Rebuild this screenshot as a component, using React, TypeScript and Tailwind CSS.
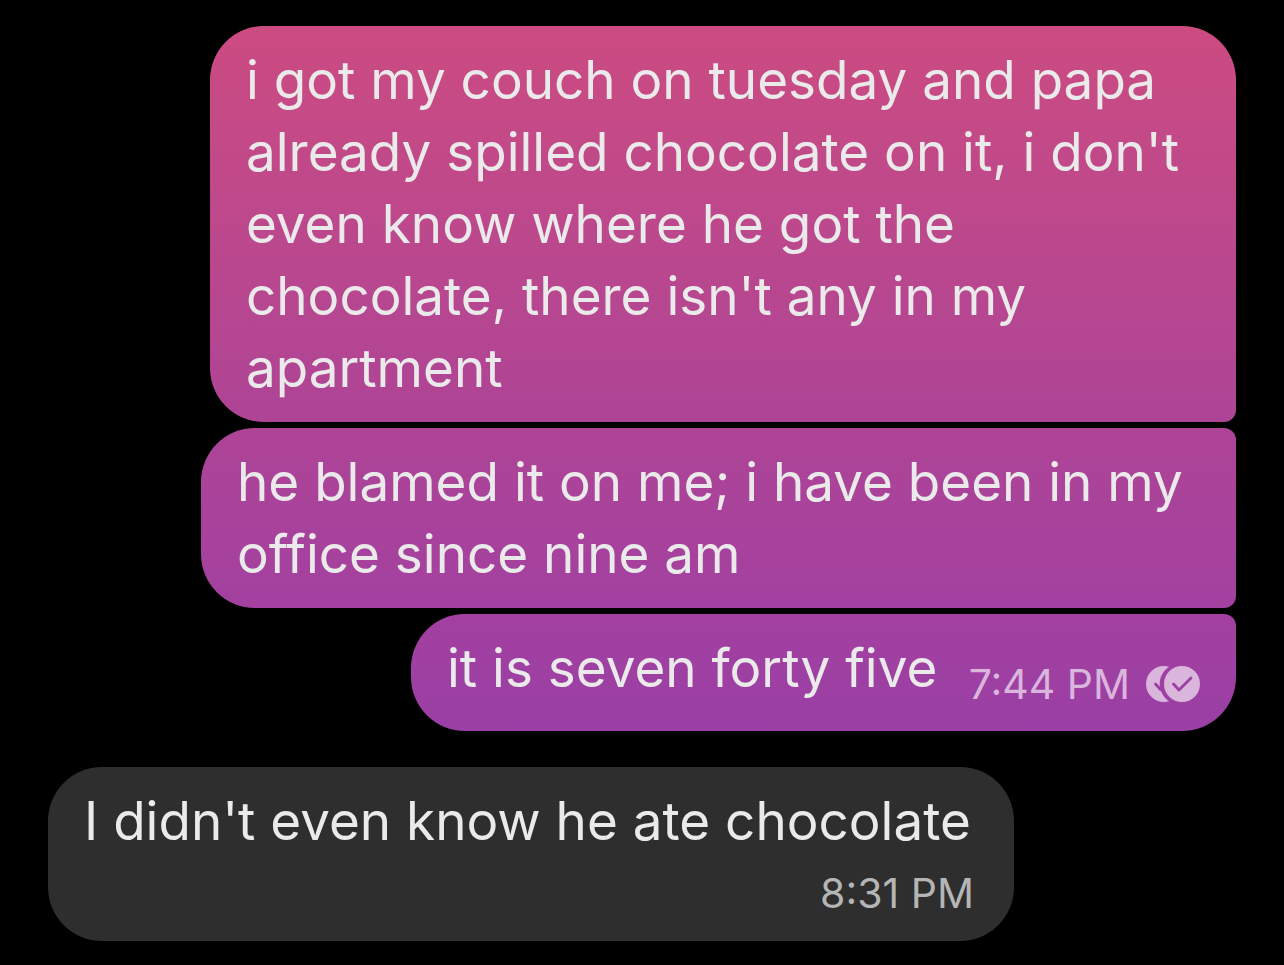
import React from 'react';

interface Message {
  lines: string[];
  shape: string;
}

const SENT: Message[] = [
  {
    lines: [
      'i got my couch on tuesday and papa',
      "already spilled chocolate on it, i don't",
      'even know where he got the',
      "chocolate, there isn't any in my",
      'apartment',
    ],
    shape: 'w-[1026px] rounded-l-[54px] rounded-tr-[54px] rounded-br-[12px] from-[#cc4b81] to-[#ae4496]',
  },
  {
    lines: ['he blamed it on me; i have been in my', 'office since nine am'],
    shape: 'w-[1035px] rounded-l-[54px] rounded-r-[12px] from-[#ae4496] to-[#a340a0]',
  },
];

const ReadReceipt: React.FC = () => (
  <svg className="h-9 w-[54px]" viewBox="0 0 54 36" role="img" aria-label="Read">
    <path
      d="M18 0a18 18 0 0 0 0 36c1.800 0 3.500-.26 5.100-.75A20.500 20.500 0 0 1 23.100.75A18 18 0 0 0 18 0Z"
      fill="#dab5dc"
    />
    <path
      d="m9.500 18 5 5.500 2.500-2.500"
      fill="none"
      stroke="#9c3fa3"
      strokeWidth="2.8"
      strokeLinecap="round"
      strokeLinejoin="round"
    />
    <circle cx="36" cy="18" r="18" fill="#dab5dc" />
    <path
      d="m27.500 18 5.500 6 12-12"
      fill="none"
      stroke="#9c3fa3"
      strokeWidth="2.8"
      strokeLinecap="round"
      strokeLinejoin="round"
    />
  </svg>
);

const App: React.FC = () => {
  return (
    <main className="min-h-screen bg-black px-12 pt-[26px] pb-6 font-['Inter',sans-serif] text-[53px] leading-[72px] text-[#eaeaea]">
      <div className="flex flex-col items-end gap-1.5">
        {SENT.map((message) => (
          <p
            key={message.lines[0]}
            className={`max-w-full bg-linear-to-b px-9 py-[18px] whitespace-nowrap ${message.shape}`}
          >
            {message.lines.map((line) => (
              <span key={line} className="block">{line}</span>
            ))}
          </p>
        ))}

        <div className="flex w-[825px] max-w-full items-end justify-between rounded-l-[54px] rounded-tr-[12px] rounded-br-[54px] bg-linear-to-b from-[#a340a0] to-[#9a3fa5] px-9 pt-[18px] pb-[27px] whitespace-nowrap">
          <p>it is seven forty five</p>
          <div className="mb-0.5 flex items-center gap-4 text-[41px] leading-9 text-[#dab5dc]">
            <time>7:44 PM</time>
            <ReadReceipt />
          </div>
        </div>
      </div>

      <div className="mt-9 w-[966px] max-w-full rounded-[54px] bg-[#2e2e2e] pt-[18px] pr-10 pb-3 pl-9 whitespace-nowrap">
        <p>I didn't even know he ate chocolate</p>
        <time className="block text-right text-[41px] leading-[72px] text-[#b5b5b5]">8:31 PM</time>
      </div>
    </main>
  );
};

export default App;
